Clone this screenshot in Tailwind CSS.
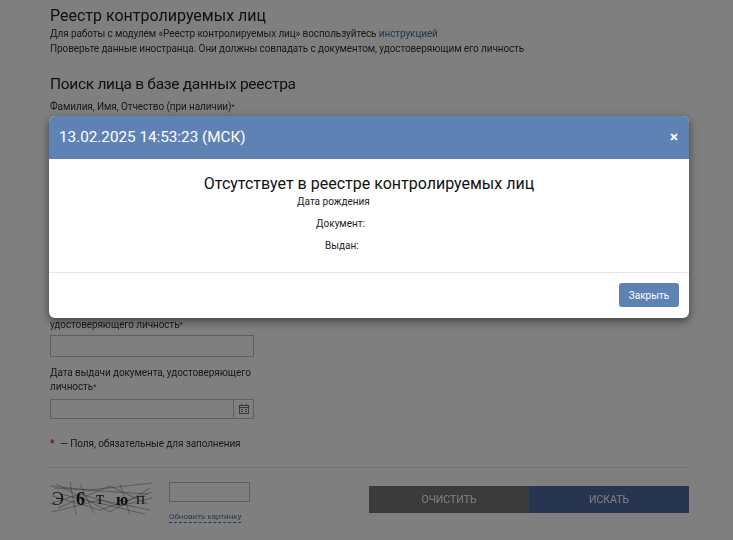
<!DOCTYPE html>
<html lang="ru">
<head>
  <meta charset="UTF-8" />
  <meta name="viewport" content="width=device-width, initial-scale=1.0"/>
  <title>Реестр контролируемых лиц</title>
  <script src="https://cdn.jsdelivr.net/npm/@tailwindcss/browser@4"></script>
</head>
<body class="relative h-[540px] overflow-hidden bg-white font-['Roboto',sans-serif] text-[#333]">
  <!-- Page under the overlay -->
  <main class="w-[639px] ml-[50px] pt-[6px] blur-[0.4px]">
    <h1 class="text-[16px] leading-[20px] text-[#222]">Реестр контролируемых лиц</h1>
    <p class="text-[10px] tracking-[-0.1px] leading-[15px]">Для работы с модулем «Реестр контролируемых лиц» воспользуйтесь <a class="text-[#4a6fa5]">инструкцией</a></p>
    <p class="text-[10px] tracking-[-0.1px] leading-[15px]">Проверьте данные иностранца. Они должны совпадать с документом, удостоверяющим его личность</p>

    <h2 class="mt-[18px] text-[15.5px] tracking-[-0.3px] leading-[20px] text-[#222]">Поиск лица в базе данных реестра</h2>
    <div class="mt-[6px] text-[10px] tracking-[-0.1px] leading-[14px]">Фамилия, Имя, Отчество (при наличии)<sup class="top-[-0.2em] text-[#c00]">*</sup></div>

    <!-- fields hidden behind the modal -->
    <div class="h-[204px]"></div>

    <div class="w-[204px]">
      <div class="text-[10px] tracking-[-0.1px] leading-[14px]">удостоверяющего личность<sup class="top-[-0.2em] text-[#c00]">*</sup></div>
      <div class="mt-[3px] h-[22px] border border-[#bdbdbd]"></div>

      <div class="mt-[9px] text-[10px] tracking-[-0.1px] leading-[14px]">Дата выдачи документа, удостоверяющего</div>
      <div class="text-[10px] tracking-[-0.1px] leading-[14px]">личность<sup class="top-[-0.2em] text-[#c00]">*</sup></div>
      <div class="mt-[5px] h-[20px] border border-[#bdbdbd] flex justify-end">
        <div class="w-[20px] border-l border-[#bdbdbd] flex items-center justify-center">
          <svg width="10" height="10" viewBox="0 0 10 10" fill="none" stroke="#777" stroke-width="1">
            <rect x="0.5" y="1.5" width="9" height="8"/>
            <path d="M0.5 3.5H9.5M2.5 0V2M7.5 0V2"/>
            <path d="M2 5.5H4M6 5.5H8M2 7.5H4M6 7.5H8"/>
          </svg>
        </div>
      </div>
    </div>

    <div class="mt-[18px] text-[10px] tracking-[-0.1px] leading-[14px]"><span class="text-[#c00]">*</span><span class="ml-[6px]">— Поля, обязательные для заполнения</span></div>

    <hr class="mt-[16px] border-[#e2e2e2]" />

    <div class="mt-[14px] flex items-start">
      <svg class="w-[102px] h-[33px] shrink-0" viewBox="0 0 102 33" fill="none" stroke="#666" stroke-width="0.5">
        <path d="M0 4L40 8L102 1M2 30L50 18L100 28M6 2L60 30L100 6M0 22L30 12L70 24L102 16M20 0L26 33M70 2L80 33M10 12L95 32M4 6L98 12M8 26L60 4L98 22M30 2L44 31M2 14L50 28L102 10"/>
        <text x="2" y="23" stroke="none" fill="#333" font-family="Liberation Serif" font-size="18">Э</text>
        <text x="26" y="23" stroke="none" fill="#222" font-family="Liberation Serif" font-size="18" font-weight="700">6</text>
        <text x="46" y="22" stroke="none" fill="#333" font-family="Liberation Serif" font-size="18">т</text>
        <text x="66" y="23" stroke="none" fill="#222" font-family="Liberation Serif" font-size="16" font-weight="700">ю</text>
        <text x="86" y="22" stroke="none" fill="#333" font-family="Liberation Serif" font-size="17">п</text>
      </svg>
      <div class="ml-[17px] w-[81px]">
        <div class="h-[20px] border border-[#c9b8b8]"></div>
        <a class="mt-[4px] inline-block text-[8px] leading-[11px] text-[#4a6fa5] border-b border-dashed border-[#4a6fa5]">Обновить картинку</a>
      </div>
      <div class="ml-[119px] mt-[4px] flex h-[27px] text-[10.5px] uppercase">
        <div class="w-[160px] bg-[#767676] text-white flex items-center justify-center">очистить</div>
        <div class="w-[160px] bg-[#4f6aa0] text-white flex items-center justify-center">искать</div>
      </div>
    </div>
  </main>

  <!-- Backdrop -->
  <div class="absolute inset-0 bg-black/50"></div>

  <!-- Modal -->
  <div class="absolute left-[49px] top-[116px] w-[640px] h-[202px] bg-white rounded-[6px] shadow-[0_3px_9px_rgba(0,0,0,0.5)] flex flex-col overflow-hidden">
    <div class="h-[43px] shrink-0 bg-[#5f82b4] text-white flex items-center justify-between pl-[10px] pr-[11px]">
      <span class="text-[15.25px]">13.02.2025 14:53:23 (МСК)</span>
      <span class="text-[15px] font-bold leading-none">×</span>
    </div>
    <div class="h-[114px] shrink-0 border-b border-[#e5e5e5] pt-[15px] text-[#222]">
      <div class="text-center text-[16px] leading-[20px] text-[#111]">Отсутствует в реестре контролируемых лиц</div>
      <div class="pl-[248px] mt-[1px] text-[10px] leading-[14px]">Дата рождения</div>
      <div class="pl-[267px] mt-[8px] text-[10px] leading-[14px]">Документ:</div>
      <div class="pl-[276px] mt-[8px] text-[10px] leading-[14px]">Выдан:</div>
    </div>
    <div class="flex justify-end pt-[10px] pr-[10px]">
      <button class="w-[60px] h-[24px] rounded-[3px] bg-[#5f82b4] text-white text-[10px]">Закрыть</button>
    </div>
  </div>
</body>
</html>
